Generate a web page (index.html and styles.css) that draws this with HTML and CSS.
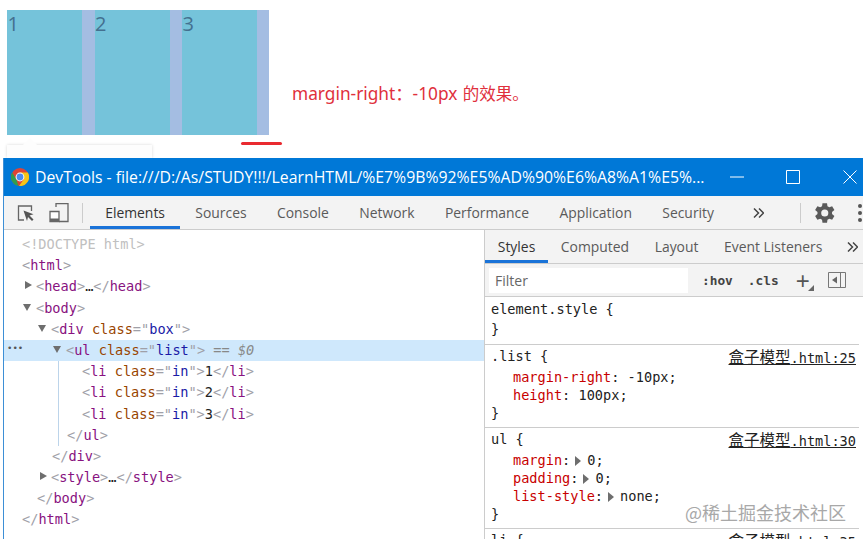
FILE: index.html
```html
<!doctype html>
<html>
<head>
<meta charset="utf-8">
<title>margin-right</title>
<link rel="stylesheet" href="styles.css">
</head>
<body>
<div class="demo">
    <div class="box">
        <div class="in">1</div>
        <div class="in">2</div>
        <div class="in">3</div>
    </div>
    <div class="note">margin-right：-10px <span class="note-cjk">的效果。</span></div>
    <div class="mark"></div>
    <div class="tip"></div>
</div>
<div class="devtools">
    <div class="titlebar">
        <svg class="chrome" viewBox="0 0 18 18" width="18" height="18">
            <circle cx="9" cy="9" r="9" fill="#dc4437"/>
            <path d="M1.200 4.500L5.400 11.500 7.500 17.900A9 9 0 0 1 1.200 4.500z" fill="#2f9e4f"/>
            <path d="M16.800 4.500H9L13 11 8 18A9 9 0 0 0 16.800 4.500z" fill="#f5c518"/>
            <circle cx="9" cy="9" r="4.400" fill="#fff"/>
            <circle cx="9" cy="9" r="3.400" fill="#4a8cf0"/>
        </svg>
        <span class="wintitle">DevTools - file:///D:/As/STUDY!!!/LearnHTML/%E7%9B%92%E5%AD%90%E6%A8%A1%E5%...</span>
        <svg class="winbtn min" viewBox="0 0 14 14" width="14" height="14"><path d="M0 7h14" stroke="#fff"/></svg>
        <svg class="winbtn max" viewBox="0 0 14 14" width="14" height="14"><path d="M.5.5h13v13H.5z" fill="none" stroke="#fff"/></svg>
        <svg class="winbtn close" viewBox="0 0 14 14" width="14" height="14"><path d="M.5.5l13 13M13.500.5l-13 13" stroke="#fff"/></svg>
    </div>
    <div class="toolbar">
        <svg class="tool inspect" viewBox="0 0 18 18" width="18" height="18">
            <path d="M7 16H1.500V2h13v5" fill="none" stroke="#666" stroke-width="1.300"/>
            <path d="M6.500 6.500l10 3.800-4 1.300 4 4-1.500 1.500-4-4-1 4z" fill="#555"/>
        </svg>
        <svg class="tool device" viewBox="0 0 20 20" width="20" height="20">
            <path d="M7 4V.500h12v18H10" fill="none" stroke="#666" stroke-width="1.300"/>
            <path d="M1 8.500h9v10H1z" fill="#fff" stroke="#666" stroke-width="1.300"/>
            <path d="M1 15.500h9v3H1z" fill="#666"/>
        </svg>
        <span class="sep"></span>
        <div class="tabs main-tabs">
            <span class="tab active">Elements</span>
            <span class="tab">Sources</span>
            <span class="tab">Console</span>
            <span class="tab">Network</span>
            <span class="tab">Performance</span>
            <span class="tab">Application</span>
            <span class="tab">Security</span>
        </div>
        <svg class="more main-more" viewBox="0 0 11 10" width="11" height="10"><path d="M1 .5l4.500 4.500L1 9.500M6 .5l4.500 4.500L6 9.500" fill="none" stroke="#444" stroke-width="1.500"/></svg>
        <span class="sep right"></span>
        <svg class="gear" viewBox="0 0 24 24" width="26" height="26">
            <path fill="#5a5a5a" d="M19.400 13a7.500 7.500 0 0 0 0-2l2.200-1.700-2.100-3.600-2.600 1a7.500 7.500 0 0 0-1.700-1L14.800 3h-4.200l-.4 2.700a7.500 7.500 0 0 0-1.700 1l-2.600-1-2.100 3.600L6 11a7.500 7.500 0 0 0 0 2l-2.200 1.700 2.100 3.600 2.600-1a7.500 7.500 0 0 0 1.700 1l.4 2.700h4.200l.4-2.700a7.500 7.500 0 0 0 1.700-1l2.600 1 2.100-3.600zM12.700 15.300a3.300 3.300 0 1 1 0-6.600 3.300 3.300 0 0 1 0 6.600z"/>
        </svg>
        <span class="kebab"><i></i><i></i><i></i></span>
    </div>
    <div class="panes">
        <div class="tree">
            <div class="row doctype">&lt;!DOCTYPE html&gt;</div>
            <div class="row"><span class="p">&lt;</span><span class="t">html</span><span class="p">&gt;</span></div>
            <div class="row d1"><i class="arrow closed"></i><span class="p">&lt;</span><span class="t">head</span><span class="p">&gt;</span>…<span class="p">&lt;/</span><span class="t">head</span><span class="p">&gt;</span></div>
            <div class="row d1"><i class="arrow open"></i><span class="p">&lt;</span><span class="t">body</span><span class="p">&gt;</span></div>
            <div class="row d2"><i class="arrow open"></i><span class="p">&lt;</span><span class="t">div</span> <span class="a">class</span><span class="p">=</span><span class="p">"</span><span class="v">box</span><span class="p">"&gt;</span></div>
            <div class="row d3 selected"><span class="dots">•••</span><i class="arrow open"></i><span class="p">&lt;</span><span class="t">ul</span> <span class="a">class</span><span class="p">=</span><span class="p">"</span><span class="v">list</span><span class="p">"&gt;</span> <span class="eq">== <em>$0</em></span></div>
            <div class="nest">
                <div class="row d4"><span class="p">&lt;</span><span class="t">li</span> <span class="a">class</span><span class="p">=</span><span class="p">"</span><span class="v">in</span><span class="p">"&gt;</span>1<span class="p">&lt;/</span><span class="t">li</span><span class="p">&gt;</span></div>
                <div class="row d4"><span class="p">&lt;</span><span class="t">li</span> <span class="a">class</span><span class="p">=</span><span class="p">"</span><span class="v">in</span><span class="p">"&gt;</span>2<span class="p">&lt;/</span><span class="t">li</span><span class="p">&gt;</span></div>
                <div class="row d4"><span class="p">&lt;</span><span class="t">li</span> <span class="a">class</span><span class="p">=</span><span class="p">"</span><span class="v">in</span><span class="p">"&gt;</span>3<span class="p">&lt;/</span><span class="t">li</span><span class="p">&gt;</span></div>
                <div class="row d3b"><span class="p">&lt;/</span><span class="t">ul</span><span class="p">&gt;</span></div>
            </div>
            <div class="row d2b"><span class="p">&lt;/</span><span class="t">div</span><span class="p">&gt;</span></div>
            <div class="row d2"><i class="arrow closed"></i><span class="p">&lt;</span><span class="t">style</span><span class="p">&gt;</span>…<span class="p">&lt;/</span><span class="t">style</span><span class="p">&gt;</span></div>
            <div class="row d1b"><span class="p">&lt;/</span><span class="t">body</span><span class="p">&gt;</span></div>
            <div class="row"><span class="p">&lt;/</span><span class="t">html</span><span class="p">&gt;</span></div>
        </div>
        <div class="side">
            <div class="side-tabs">
                <div class="tabs">
                    <span class="tab active">Styles</span>
                    <span class="tab">Computed</span>
                    <span class="tab">Layout</span>
                    <span class="tab">Event Listeners</span>
                </div>
                <svg class="more side-more" viewBox="0 0 11 10" width="11" height="10"><path d="M1 .5l4.500 4.500L1 9.500M6 .5l4.500 4.500L6 9.500" fill="none" stroke="#444" stroke-width="1.500"/></svg>
            </div>
            <div class="filterbar">
                <div class="filter">Filter</div>
                <span class="pill hov">:hov</span>
                <span class="pill cls">.cls</span>
                <span class="plus">+</span>
                <i class="corner"></i>
                <svg class="toggle" viewBox="0 0 18 18" width="18" height="18">
                    <path d="M.5 1.500h17v15H.5z" fill="none" stroke="#777"/>
                    <path d="M12.500 1.500v15" stroke="#777"/>
                    <path d="M9 5.500v7L4 9z" fill="#666"/>
                </svg>
            </div>
            <div class="rules">
                <div class="rule first">
                    <div class="sel">element.style {</div>
                    <div class="end">}</div>
                </div>
                <div class="rule">
                    <div class="sel"><a class="src"><span class="cjk">盒子模型</span>.html:25</a>.list {</div>
                    <div class="props">
                        <div class="prop"><b>margin-right</b>: -10px;</div>
                        <div class="prop"><b>height</b>: 100px;</div>
                    </div>
                    <div class="end">}</div>
                </div>
                <div class="rule">
                    <div class="sel"><a class="src"><span class="cjk">盒子模型</span>.html:30</a>ul {</div>
                    <div class="props">
                        <div class="prop"><b>margin</b>:<i class="arrow closed small"></i>0;</div>
                        <div class="prop"><b>padding</b>:<i class="arrow closed small"></i>0;</div>
                        <div class="prop"><b>list-style</b>:<i class="arrow closed small"></i>none;</div>
                    </div>
                    <div class="end">}</div>
                </div>
                <div class="rule last">
                    <div class="sel"><a class="src"><span class="cjk">盒子模型</span>.html:35</a>li {</div>
                </div>
            </div>
        </div>
    </div>
    <div class="watermark">@稀土掘金技术社区</div>
</div>
</body>
</html>
```

FILE: styles.css
```css
html, body { margin: 0; padding: 0; }
body {
    width: 863px;
    height: 539px;
    overflow: hidden;
    background: #fff;
    font-family: "Open Sans", "Noto Sans CJK SC", sans-serif;
}

/* demo page above the window */
.demo {
    position: relative;
    height: 158px;
    padding: 10px 0 0 7px;
    box-sizing: border-box;
    display: flex;
}
.box {
    width: 262px;
    height: 125px;
    display: flex;
    gap: 12.500px;
    background: #a4bde2;
}
.in {
    width: 75px;
    background: #75c3da;
    color: #44708f;
    font-size: 20px;
    line-height: 28px;
    padding-left: 0.5px;
    box-sizing: border-box;
}
.note {
    margin: 70px 0 0 23px;
    color: #e0303c;
    font-family: "Noto Sans", "Noto Sans CJK SC", sans-serif;
    font-size: 17.300px;
    line-height: 28px;
    white-space: nowrap;
}
.note-cjk { font-size: 16.500px; margin-left: 1px; }
.mark {
    position: absolute;
    left: 241px;
    top: 142px;
    width: 41px;
    height: 3px;
    background: #e92a30;
    border-radius: 2px;
}
.tip {
    position: absolute;
    left: 7px;
    top: 145px;
    width: 145px;
    height: 13px;
    background: #fdfdfd;
    box-shadow: 0 0 3px #d8d8d8;
}
.tip::before {
    content: "";
    position: absolute;
    left: 18px;
    top: -5px;
    width: 10px;
    height: 10px;
    background: #fdfdfd;
    transform: rotate(45deg);
}

/* window */
.devtools {
    position: relative;
    margin-left: 3px;
    height: 381px;
    border-left: 1px solid #3d8fd6;
    background: #fff;
    overflow: hidden;
}
.titlebar {
    height: 38px;
    background: #0078d7;
    display: flex;
    align-items: center;
    color: #fff;
    margin-left: -1px;
}
.chrome { margin-left: 8px; flex: none; }
.wintitle { margin-left: 6px; font-size: 15.800px; width: 672px; flex: none; white-space: nowrap; }
.winbtn { flex: none; }
.min { margin-left: 23px; }
.max { margin-left: 42px; }
.close { margin-left: 43px; }

.toolbar {
    height: 33px;
    background: #f3f3f3;
    border-bottom: 1px solid #ccc;
    display: flex;
    align-items: center;
    position: relative;
}
.tool { flex: none; }
.inspect { margin-left: 13px; }
.device { margin-left: 14px; }
.sep { width: 1px; height: 20px; background: #ccc; margin: 0 7px 0 13px; flex: none; }
.sep.right { margin: 0 10px 0 0; }
.tabs { display: flex; height: 100%; }
.main-tabs { width: 640px; flex: none; }
.tab {
    padding: 0 15.200px;
    display: flex;
    align-items: center;
    color: #5a5a5a;
    font-size: 13.900px;
    white-space: nowrap;
    box-sizing: border-box;
}
.tab.active { color: #333; border-bottom: 3px solid #1a73d8; padding-top: 3px; }
.more { flex: none; }
.main-more { margin: 0 36px 0 23px; }
.gear { flex: none; }
.kebab { display: flex; flex-direction: column; gap: 3px; margin-left: 21px; flex: none; }
.kebab i { width: 4px; height: 4px; background: #555; border-radius: 50%; }

.panes { display: flex; height: 310px; }
.tree {
    width: 480px;
    flex: none;
    padding-top: 4px;
    font-family: "DejaVu Sans Mono", monospace;
    font-size: 13.600px;
    color: #222;
    border-right: 1px solid #ccc;
}
.row {
    height: 21.200px;
    line-height: 21.200px;
    padding-left: 18px;
    position: relative;
    white-space: pre;
}
.doctype { color: #c0c0c0; }
.p { color: #a0a0a8; }
.t { color: #881280; }
.a { color: #994500; }
.v { color: #1a1aa6; }
.d1 { padding-left: 32px; }
.d1b { padding-left: 33px; }
.d2 { padding-left: 47px; }
.d2b { padding-left: 48px; }
.d3 { padding-left: 62px; }
.d3b { padding-left: 63px; }
.d4 { padding-left: 78px; }
.selected { background: #cfe8fc; }
.eq { color: #888; }
.eq em { font-style: italic; }
.dots {
    position: absolute;
    left: 3px;
    top: -2px;
    font-size: 9px;
    color: #555;
}
.nest { position: relative; }
.nest::before {
    content: "";
    position: absolute;
    left: 54px;
    top: 0;
    bottom: 0;
    width: 1px;
    background: #bcd4ea;
}
.arrow { position: absolute; width: 0; height: 0; }
.arrow.closed {
    margin: 5px 0 0 -11px;
    border-left: 7px solid #6e6e6e;
    border-top: 4.500px solid transparent;
    border-bottom: 4.500px solid transparent;
}
.arrow.open {
    margin: 6px 0 0 -13px;
    border-top: 7px solid #6e6e6e;
    border-left: 4.500px solid transparent;
    border-right: 4.500px solid transparent;
}

.side { flex: 1; min-width: 0; display: flex; flex-direction: column; }
.side-tabs {
    height: 34px;
    flex: none;
    background: #f3f3f3;
    border-bottom: 1px solid #ccc;
    display: flex;
    align-items: center;
    box-sizing: border-box;
}
.side-tabs .tab { padding: 0 12.800px; }
.side-tabs .tab.active { padding-top: 3px; }
.side-more { margin-left: 12px; }
.filterbar {
    height: 33px;
    flex: none;
    background: #f3f3f3;
    border-bottom: 1px solid #ccc;
    display: flex;
    align-items: center;
    position: relative;
    box-sizing: border-box;
    padding-left: 4px;
}
.filter {
    width: 193px;
    height: 25px;
    padding-left: 6px;
    background: #fff;
    color: #666;
    font-size: 14px;
    line-height: 25px;
}
.pill {
    font-family: "DejaVu Sans Mono", monospace;
    font-weight: bold;
    font-size: 12.800px;
    color: #444;
}
.hov { margin-left: 14px; }
.cls { margin-left: 15px; }
.plus { margin-left: 17px; font-family: "Liberation Sans", sans-serif; font-size: 24px; line-height: 23px; color: #555; }
.corner {
    position: absolute;
    left: 323px;
    top: 21px;
    width: 0;
    height: 0;
    border-bottom: 6px solid #666;
    border-left: 6px solid transparent;
}
.toggle { margin-left: 18px; flex: none; }

.rules {
    width: 374px;
    padding-top: 1px;
    font-family: "DejaVu Sans Mono", "Noto Sans CJK SC", monospace;
    font-size: 13.600px;
    color: #222;
}
.rule { border-bottom: 1px solid #ccc; padding: 2px 0 5px 6px; }
.rule.first { padding-bottom: 6px; }
.rule.first .sel { margin-bottom: 2px; }
.rule.last { border: 0; }
.sel, .end { height: 18px; line-height: 18px; }
.sel { margin-bottom: 3px; }
.src { float: right; color: #222; text-decoration: underline; margin-right: 3px; }
.cjk { font-family: "Noto Sans CJK SC", sans-serif; font-size: 15.500px; }
.prop { height: 18px; line-height: 18px; padding-left: 22px; white-space: pre; }
.prop b { font-weight: normal; color: #c80000; }
.arrow.closed.small { position: static; display: inline-block; margin: 0 6px 0 5px; border-left-width: 6px; border-top-width: 5px; border-bottom-width: 5px; vertical-align: -1px; }

.watermark {
    position: absolute;
    left: 681px;
    top: 342px;
    color: #a8a8a8;
    font-family: "Noto Sans CJK SC", sans-serif;
    font-size: 18px;
    line-height: 24px;
    white-space: nowrap;
    text-shadow: 0 0 2px #fff;
}
```
